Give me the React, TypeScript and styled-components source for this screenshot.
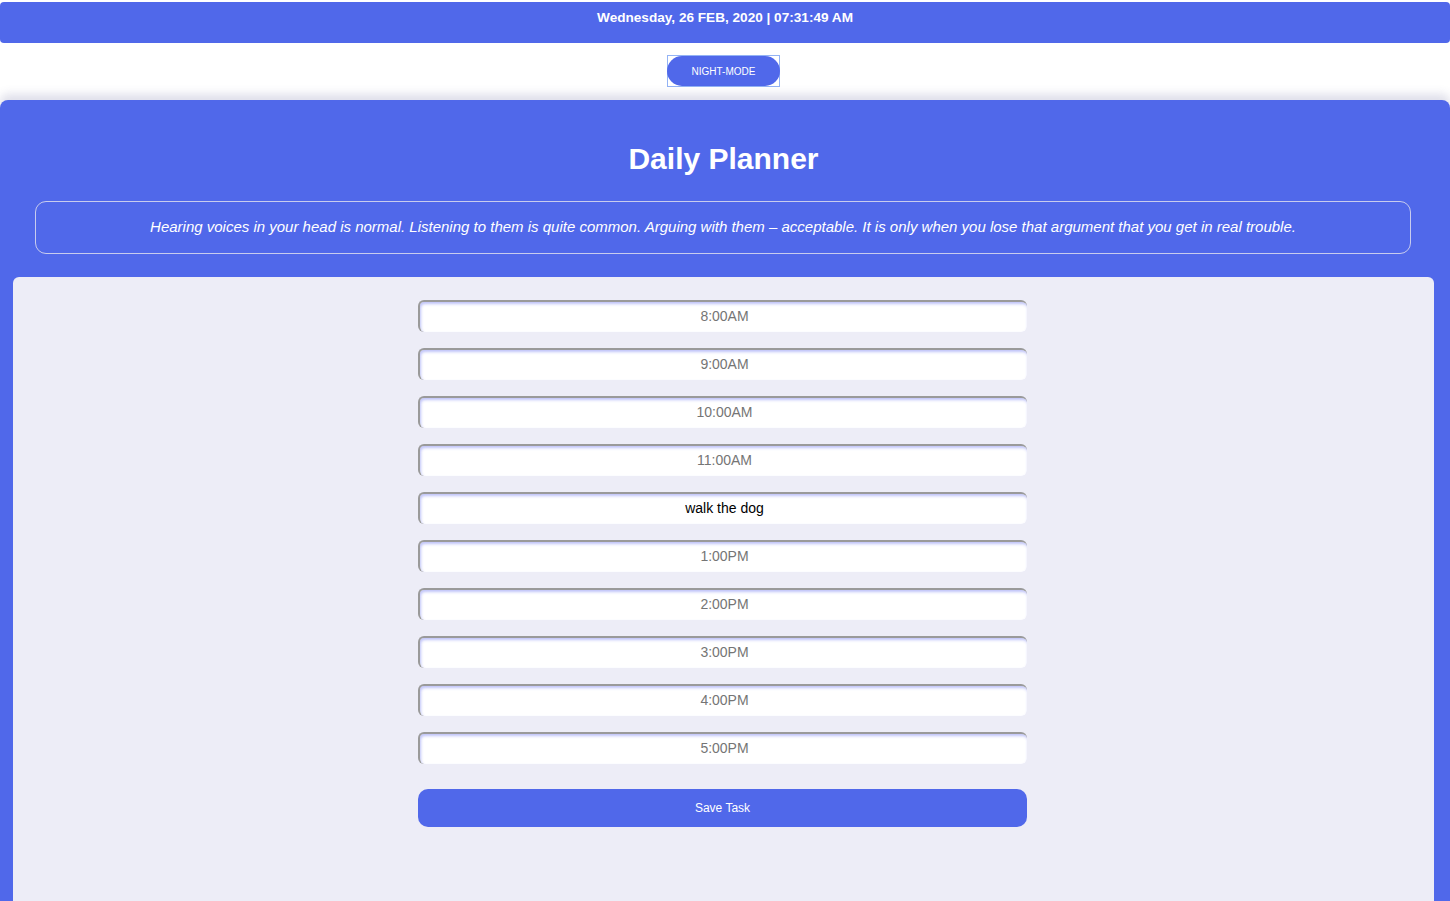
import React from "react";
import styled, { createGlobalStyle } from "styled-components";

const Global = createGlobalStyle`
  html, body { margin: 0; padding: 0; background: #ffffff; }
  body { font-family: "Liberation Sans", Arial, sans-serif; }
  * { box-sizing: border-box; }
`;

const BLUE = "#5068ea";

const Page = styled.div`
  display: flex;
  flex-direction: column;
  min-height: 901px;
  padding-top: 2px;
`;

const Header = styled.header`
  height: 41px;
  background: ${BLUE};
  border-radius: 4px;
  color: #fff;
  font-weight: bold;
  font-size: 13.6px;
  text-align: center;
  padding-top: 8px;
`;

const ModeRow = styled.div`
  display: flex;
  justify-content: center;
  padding-top: 12px;
  height: 57px;
`;

const FocusRing = styled.span`
  display: flex;
  width: 113px;
  height: 32px;
  border: 1px solid #93b3f5;
  margin-left: -3px;
`;

const ModeButton = styled.button`
  width: 113px;
  height: 30px;
  margin: 0 -1px;
  border-radius: 15px;
  background: ${BLUE};
  color: #fff;
  border: none;
  font-family: "Liberation Sans", Arial, sans-serif;
  font-size: 10px;
  padding: 0;
`;

const Main = styled.main`
  flex: 1;
  background: ${BLUE};
  border-radius: 8px 8px 0 0;
  box-shadow: 0 -6px 10px rgba(80, 80, 140, 0.18);
  display: flex;
  flex-direction: column;
  padding: 0 16px 0 13px;
`;

const Title = styled.h1`
  margin: 40px 0 0;
  font-size: 30px;
  font-weight: bold;
  color: #fff;
  text-align: center;
  line-height: 38px;
`;

const Quote = styled.p`
  margin: 23px 23px 0 22px;
  height: 53px;
  border: 1px solid #c8ccee;
  border-radius: 11px;
  color: #fff;
  font-style: italic;
  font-size: 15px;
  display: flex;
  align-items: center;
  justify-content: center;
  padding-bottom: 2px;
`;

const Card = styled.section`
  margin-top: 23px;
  flex: 1;
  background: #ededf7;
  border-radius: 6px 6px 0 0;
  display: flex;
  flex-direction: column;
  align-items: center;
  padding: 23px 0 0;
`;

const Form = styled.div`
  width: 609px;
  margin-right: 2px;
  display: flex;
  flex-direction: column;
  gap: 16px;
`;

const Slot = styled.input`
  height: 32px;
  width: 100%;
  border: none;
  border-top: 2px solid #9a9a9a;
  border-left: 2px solid #9a9a9a;
  border-radius: 6px;
  background: #fff;
  box-shadow: inset 1px 2px 3px rgba(110, 120, 240, 0.45);
  text-align: center;
  font-family: "Liberation Sans", Arial, sans-serif;
  font-size: 14px;
  color: #000;
  padding: 0 0 2px 2px;
  &::placeholder { color: #757575; }
`;

const Save = styled.button`
  margin-top: 9px;
  height: 38px;
  width: 609px;
  border: none;
  border-radius: 10px;
  background: ${BLUE};
  color: #fff;
  font-family: "Liberation Sans", Arial, sans-serif;
  font-size: 12px;
`;

const hours = ["8:00AM", "9:00AM", "10:00AM", "11:00AM", "12:00PM", "1:00PM", "2:00PM", "3:00PM", "4:00PM", "5:00PM"];
const values: Record<string, string> = { "12:00PM": "walk the dog" };

export default function App() {
  return (
    <>
      <Global />
      <Page>
        <Header>Wednesday, 26 FEB, 2020 | 07:31:49 AM</Header>
        <ModeRow>
          <FocusRing>
            <ModeButton>NIGHT-MODE</ModeButton>
          </FocusRing>
        </ModeRow>
        <Main>
          <Title>Daily Planner</Title>
          <Quote>
            Hearing voices in your head is normal. Listening to them is quite common. Arguing with them – acceptable. It is only when you lose that argument that you get in real trouble.
          </Quote>
          <Card>
            <Form>
              {hours.map((h) => (
                <Slot key={h} placeholder={h} defaultValue={values[h] ?? ""} />
              ))}
              <Save>Save Task</Save>
            </Form>
          </Card>
        </Main>
      </Page>
    </>
  );
}
